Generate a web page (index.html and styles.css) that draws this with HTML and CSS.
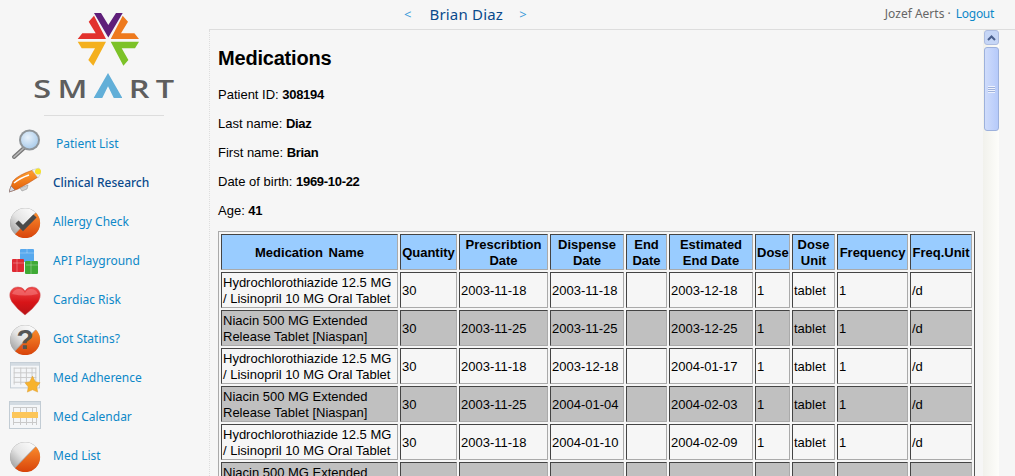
FILE: index.html
```html
<!DOCTYPE html>
<html lang="en">
<head>
    <meta charset="UTF-8">
    <meta name="viewport" content="width=device-width, initial-scale=1.0">
    <title>SMART - Medications</title>
    <link rel="stylesheet" href="styles.css">
</head>
<body>
    <svg class="icon-defs" width="0" height="0">
        <defs>
            <linearGradient id="ballGrey" x1="1" y1="0" x2="0" y2="1">
                <stop offset="0" stop-color="#fff"/>
                <stop offset="0.55" stop-color="#e4e4e4"/>
                <stop offset="1" stop-color="#9a9a9a"/>
            </linearGradient>
            <linearGradient id="ballOrange" x1="0" y1="0" x2="0" y2="1">
                <stop offset="0" stop-color="#f98a2c"/>
                <stop offset="1" stop-color="#d8430a"/>
            </linearGradient>
            <linearGradient id="heartRed" x1="0" y1="0" x2="0" y2="1">
                <stop offset="0" stop-color="#ef4b4b"/>
                <stop offset="0.55" stop-color="#d81518"/>
                <stop offset="1" stop-color="#b81216"/>
            </linearGradient>
            <linearGradient id="penOrange" x1="0" y1="0" x2="0" y2="1">
                <stop offset="0" stop-color="#ffa030"/>
                <stop offset="1" stop-color="#e05a08"/>
            </linearGradient>
            <radialGradient id="lens" cx="0.4" cy="0.35" r="0.7">
                <stop offset="0" stop-color="#e8f2fb"/>
                <stop offset="1" stop-color="#a9cbea"/>
            </radialGradient>
            <symbol id="ball" viewBox="0 0 32 32">
                <circle cx="16" cy="17" r="15" fill="#a8a8a8"/>
                <path d="M27 6.800A15 15 0 0 1 6 28.200Z" fill="url(#ballOrange)"/>
                <path d="M26.400 6.600A14.700 14.700 0 0 0 5.600 27.400Z" fill="url(#ballGrey)"/>
            </symbol>
            <symbol id="calendar" viewBox="0 0 32 32">
                <rect x="0.500" y="0.500" width="31" height="27" fill="#f4f6f8" stroke="#c2ccd4"/>
                <rect x="1" y="1" width="30" height="3" fill="#d3dbe2"/>
                <path d="M4 6.500H28M4 11.500H28M4 16.500H28M4 21.500H28M4.500 6V24M11.500 6V24M17.500 6V24M23.500 6V24M27.500 6V24" stroke="#c9c9c9" fill="none"/>
            </symbol>
        </defs>
    </svg>

    <aside class="sidebar">
        <div class="logo">
            <svg class="logo-star" width="62" height="54" viewBox="77 13 62 54">
                <polygon fill="#5f1f7a" points="94,13 101,13 108.300,25 116,13 122.700,13 108.300,37.500"/>
                <polygon fill="#e2322d" points="77.700,39 106,39 94,15.700 88.700,21.700 95.700,33.300 82.300,33.300"/>
                <polygon fill="#ee7a1e" points="139,39 110.700,39 122.700,15.700 128,21.700 121,33.300 134.400,33.300"/>
                <polygon fill="#f4b01e" points="77.700,41.700 106,41.700 93.300,65.700 88.300,60 95,48.300 81.700,48.300"/>
                <polygon fill="#7cc228" points="139,41.700 110.700,41.700 123.400,65.700 128.400,60 121.700,48.300 135,48.300"/>
            </svg>
            <div class="logo-text">SM<span class="logo-a">A</span>RT</div>
        </div>
        <ul class="nav">
            <li class="nav-item nav-first">
                <svg class="nav-icon" viewBox="0 0 32 32">
                    <path d="M15 20L5 29" stroke="#777" stroke-width="4" stroke-linecap="round"/>
                    <path d="M15 20L5 29" stroke="#bbb" stroke-width="1.500" stroke-linecap="round"/>
                    <circle cx="20.500" cy="12" r="10.500" fill="#8f9599"/>
                    <circle cx="20.500" cy="12" r="8.500" fill="url(#lens)"/>
                </svg>
                <a href="#">Patient List</a>
            </li>
            <li class="nav-item nav-current">
                <svg class="nav-icon" viewBox="0 0 32 32">
                    <path d="M0 25L4 14Q9 8 24 3L29 10Q20 16 9 22Z" fill="url(#penOrange)" stroke="#b9460a" stroke-width="0.500"/>
                    <path d="M0 25L2 19L6 23Z" fill="#d8d8e0" stroke="#667" stroke-width="0.500"/>
                    <path d="M5 16Q11 11 20 8" stroke="#fff" stroke-width="1.500" fill="none"/>
                    <path d="M11 21L19 18L18 22L13 24Z" fill="#cfcfcf" stroke="#888" stroke-width="0.500"/>
                    <path d="M23 3L30 1L32 6L29 11Z" fill="#f2f2f2" stroke="#bbb" stroke-width="0.500"/>
                    <circle cx="29" cy="4.500" r="3" fill="#f7e32a"/>
                </svg>
                <a href="#">Clinical Research</a>
            </li>
            <li class="nav-item">
                <svg class="nav-icon" viewBox="0 0 32 32">
                    <use href="#ball"/>
                    <path d="M8 16L14 22L26 10" stroke="#4a4a4a" stroke-width="4.500" fill="none"/>
                </svg>
                <a href="#">Allergy Check</a>
            </li>
            <li class="nav-item">
                <svg class="nav-icon" viewBox="0 0 32 32">
                    <rect x="11" y="4" width="14" height="13" rx="1" fill="#58a9ee"/>
                    <rect x="3" y="14" width="12" height="13" rx="1" fill="#df2a33"/>
                    <rect x="16" y="16" width="13" height="13" rx="1" fill="#3faa35"/>
                    <path d="M11 8H25M4 18H15M17 20H29M18 8V4M8 14V27M22 16V29" stroke="#fff" stroke-opacity="0.300" fill="none"/>
                </svg>
                <a href="#">API Playground</a>
            </li>
            <li class="nav-item">
                <svg class="nav-icon" viewBox="0 0 32 32">
                    <path d="M16 31Q8 25 3 18Q0 13 1 9Q3 3 9 3Q14 3 16 7Q18 3 23 3Q29 3 31 9Q32 13 29 18Q24 25 16 31Z" fill="url(#heartRed)" stroke="#c84a4d" stroke-width="0.500"/>
                    <path d="M3 10Q5 5 10 5Q14 5 16 9Q18 5 22 5Q27 5 29 10Q16 13 3 10Z" fill="#f7888a" fill-opacity="0.500"/>
                </svg>
                <a href="#">Cardiac Risk</a>
            </li>
            <li class="nav-item">
                <svg class="nav-icon" viewBox="0 0 32 32">
                    <use href="#ball"/>
                    <text class="ball-mark" x="16" y="26" text-anchor="middle">?</text>
                </svg>
                <a href="#">Got Statins?</a>
            </li>
            <li class="nav-item">
                <svg class="nav-icon" viewBox="0 0 32 34">
                    <use href="#calendar" width="32" height="32"/>
                    <polygon points="24,15 27,21 32,22 28.500,26.500 29.500,32 24,29.500 18.500,32 19.500,26.500 16,22 21,21" fill="#f7b32e" stroke="#dd9a2a" stroke-width="0.500"/>
                </svg>
                <a href="#">Med Adherence</a>
            </li>
            <li class="nav-item">
                <svg class="nav-icon" viewBox="0 0 32 32">
                    <use href="#calendar"/>
                    <rect x="3" y="11" width="26" height="6" fill="#fcc65a"/>
                </svg>
                <a href="#">Med Calendar</a>
            </li>
            <li class="nav-item">
                <svg class="nav-icon" viewBox="0 0 32 32">
                    <use href="#ball"/>
                </svg>
                <a href="#">Med List</a>
            </li>
        </ul>
    </aside>

    <div class="main">
        <header class="topbar">
            <div class="patient-nav">
                <a class="arrow" href="#">&lt;</a>
                <a class="patient-name" href="#">Brian Diaz</a>
                <a class="arrow" href="#">&gt;</a>
            </div>
            <div class="user">Jozef Aerts · <a href="#">Logout</a></div>
        </header>
        <div class="body-row">
            <div class="content">
                <h1>Medications</h1>
                <p>Patient ID: <b>308194</b></p>
                <p>Last name: <b>Diaz</b></p>
                <p>First name: <b>Brian</b></p>
                <p>Date of birth: <b>1969-10-22</b></p>
                <p>Age: <b>41</b></p>
                <table class="med-table">
                    <thead>
                        <tr>
                            <th>Medication Name</th>
                            <th>Quantity</th>
                            <th>Prescribtion Date</th>
                            <th>Dispense Date</th>
                            <th>End Date</th>
                            <th>Estimated End Date</th>
                            <th>Dose</th>
                            <th>Dose Unit</th>
                            <th>Frequency</th>
                            <th>Freq.Unit</th>
                        </tr>
                    </thead>
                    <tbody>
                        <tr>
                            <td>Hydrochlorothiazide 12.5 MG / Lisinopril 10 MG Oral Tablet</td>
                            <td>30</td><td>2003-11-18</td><td>2003-11-18</td><td></td><td>2003-12-18</td>
                            <td>1</td><td>tablet</td><td>1</td><td>/d</td>
                        </tr>
                        <tr class="alt">
                            <td>Niacin 500 MG Extended Release Tablet [Niaspan]</td>
                            <td>30</td><td>2003-11-25</td><td>2003-11-25</td><td></td><td>2003-12-25</td>
                            <td>1</td><td>tablet</td><td>1</td><td>/d</td>
                        </tr>
                        <tr>
                            <td>Hydrochlorothiazide 12.5 MG / Lisinopril 10 MG Oral Tablet</td>
                            <td>30</td><td>2003-11-18</td><td>2003-12-18</td><td></td><td>2004-01-17</td>
                            <td>1</td><td>tablet</td><td>1</td><td>/d</td>
                        </tr>
                        <tr class="alt">
                            <td>Niacin 500 MG Extended Release Tablet [Niaspan]</td>
                            <td>30</td><td>2003-11-25</td><td>2004-01-04</td><td></td><td>2004-02-03</td>
                            <td>1</td><td>tablet</td><td>1</td><td>/d</td>
                        </tr>
                        <tr>
                            <td>Hydrochlorothiazide 12.5 MG / Lisinopril 10 MG Oral Tablet</td>
                            <td>30</td><td>2003-11-18</td><td>2004-01-10</td><td></td><td>2004-02-09</td>
                            <td>1</td><td>tablet</td><td>1</td><td>/d</td>
                        </tr>
                        <tr class="alt">
                            <td>Niacin 500 MG Extended Release Tablet [Niaspan]</td>
                            <td>30</td><td>2003-11-25</td><td>2004-01-24</td><td></td><td>2004-02-23</td>
                            <td>1</td><td>tablet</td><td>1</td><td>/d</td>
                        </tr>
                    </tbody>
                </table>
            </div>
            <div class="scrollbar">
                <div class="scroll-btn">
                    <svg width="9" height="6" viewBox="0 0 9 6"><path d="M1 5L4.500 1.500L8 5" stroke="#4a5f8c" stroke-width="2" fill="none"/></svg>
                </div>
                <div class="scroll-thumb"><span class="grip"></span></div>
            </div>
        </div>
    </div>
</body>
</html>
```

FILE: styles.css
```css
* {
    box-sizing: border-box;
}

html, body {
    height: 100%;
}

body {
    margin: 0;
    display: flex;
    overflow: hidden;
    background-color: #f6f6f6;
    color: #000;
    font-family: "Liberation Sans", Arial, sans-serif;
    font-size: 13px;
}

.icon-defs {
    position: absolute;
}

/* Left column */
.sidebar {
    width: 209px;
    flex-shrink: 0;
    font-family: "Noto Sans", sans-serif;
}

.logo {
    width: 120px;
    height: 116px;
    margin-left: 44px;
    padding-top: 13px;
    border-bottom: 1px solid #ddd;
    display: flex;
    flex-direction: column;
    align-items: center;
}

.logo-star {
    display: block;
    flex-shrink: 0;
    margin-left: 8px;
}

.logo-text {
    height: 25px;
    margin: 6px 0 0 6px;
    display: flex;
    align-items: flex-end;
    white-space: nowrap;
    font-family: "Open Sans", sans-serif;
    font-size: 26px;
    font-weight: 600;
    line-height: 19px;
    letter-spacing: 5px;
    color: #5e5e5e;
    transform: scaleX(1.25);
}

/* the logo's A is a caret with no crossbar */
.logo-a {
    width: 23px;
    height: 25px;
    margin-right: 5px;
    color: transparent;
    background-color: #62afd8;
    clip-path: polygon(50% 0, 100% 100%, 70% 100%, 50% 53%, 30% 100%, 0 100%);
}

.nav {
    list-style: none;
    margin: 8px 0 0;
    padding: 0 0 0 9px;
}

.nav-item {
    height: 39px;
    display: flex;
    align-items: center;
    gap: 12px;
}

.nav-icon {
    width: 32px;
    height: 32px;
    flex-shrink: 0;
}

.nav-item a {
    color: #0d88c8;
    text-decoration: none;
    font-size: 12px;
}

.nav-first a {
    margin-left: 3px;
}

.nav-current a {
    color: #0a4a8c;
    font-weight: 500;
}

.ball-mark {
    font-family: "Liberation Sans", sans-serif;
    font-size: 28px;
    font-weight: 700;
    fill: #555;
}

/* Right column */
.main {
    flex: 1;
    min-width: 0;
    display: flex;
    flex-direction: column;
}

.topbar {
    height: 30px;
    flex-shrink: 0;
    padding: 0 21px 2px 195px;
    border-bottom: 1px solid #ddd;
    display: flex;
    align-items: center;
    justify-content: space-between;
    font-family: "Noto Sans", sans-serif;
    font-size: 12px;
}

.patient-nav {
    display: flex;
    align-items: center;
    gap: 17px;
}

.patient-nav a {
    text-decoration: none;
}

.arrow {
    color: #3a9ad9;
    font-size: 13px;
}

.patient-name {
    margin: 0 -1px 0 1px;
    color: #0a4a8c;
    font-size: 15px;
    letter-spacing: 0.2px;
}

.user {
    color: #666;
}

.user a {
    margin-left: 2px;
    color: #0d88c8;
    text-decoration: none;
    letter-spacing: -0.3px;
}

.body-row {
    flex: 1;
    min-height: 0;
    display: flex;
    border-left: 1px dotted #ddd;
}

.content {
    flex: 1;
    min-width: 0;
    padding: 17px 0 0 8px;
    overflow: hidden;
}

h1 {
    margin: 0 0 17px;
    font-size: 20px;
    line-height: 23px;
    letter-spacing: -0.2px;
}

p {
    margin: 0 0 14px;
    line-height: 15px;
}

p b {
    letter-spacing: -0.3px;
}

/* Table */
.med-table {
    width: 757px;
    table-layout: fixed;
    border-collapse: separate;
    border-spacing: 2px;
    border: 1px solid;
    border-color: #aaa #555 #555 #aaa;
    margin-top: -1px;
}

.med-table th,
.med-table td {
    height: 36px;
    padding: 2px 1px 0;
    border: 1px solid;
    border-color: #444 #aaa #aaa #444;
    line-height: 16px;
    font-size: 13px;
}

.med-table th {
    background-color: #99ccff;
}

.alt td {
    background-color: #c0c0c0;
}

.med-table th:nth-child(1) { width: 177px; word-spacing: 2px; }
.med-table th:nth-child(2) { width: 57px; }
.med-table th:nth-child(3) { width: 89px; }
.med-table th:nth-child(4) { width: 74px; }
.med-table th:nth-child(5) { width: 41px; }
.med-table th:nth-child(6) { width: 84px; }
.med-table th:nth-child(7) { width: 35px; }
.med-table th:nth-child(8) { width: 43px; }
.med-table th:nth-child(9) { width: 71px; }
.med-table th:nth-child(10) { width: 62px; }

/* Scrollbar */
.scrollbar {
    width: 16px;
    flex-shrink: 0;
    margin-right: 16px;
    padding-left: 1px;
    background: linear-gradient(to right, #f1f1ec, #fdfdfa);
}

.scroll-btn {
    height: 15px;
    border: 1px solid #aebde0;
    border-radius: 3px;
    background-color: #c6d6f6;
    display: flex;
    align-items: center;
    justify-content: center;
}

.scroll-thumb {
    height: 84px;
    margin-top: 2px;
    border: 1px solid #9db1dc;
    border-radius: 3px;
    background: linear-gradient(to right, #cfdcfb, #b6cafa);
    display: flex;
    align-items: center;
    justify-content: center;
}

.grip {
    width: 7px;
    height: 7px;
    background: repeating-linear-gradient(to bottom, #eef2fd 0, #eef2fd 1px, #9fb2dc 1px, #9fb2dc 2px);
}
```
